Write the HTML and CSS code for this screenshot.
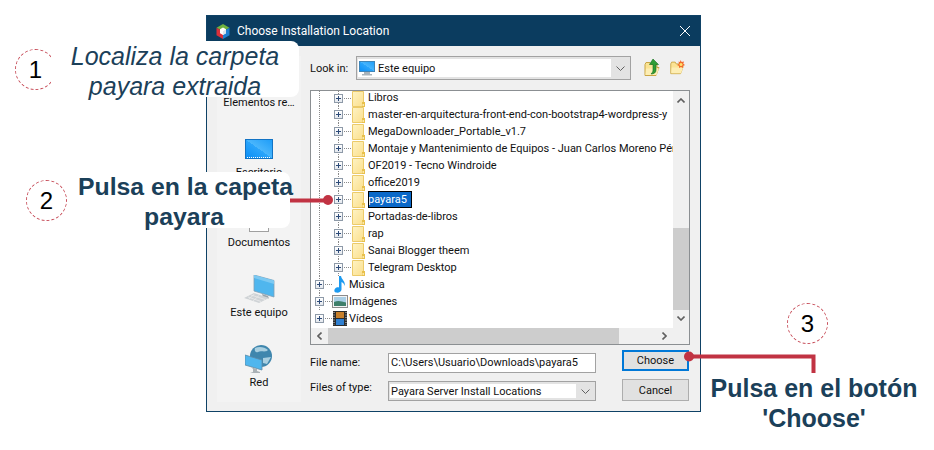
FILE: index.html
```html
<!DOCTYPE html>
<html lang="es">
<head>
<meta charset="utf-8">
<title>Choose Installation Location</title>
<link rel="stylesheet" href="styles.css">
</head>
<body>
<svg class="defs" width="0" height="0" aria-hidden="true">
  <defs>
    <linearGradient id="fold" x1="0" y1="0" x2="1" y2="1"><stop offset="0" stop-color="#fef3c4"/><stop offset="1" stop-color="#fbdf8c"/></linearGradient>
    <linearGradient id="scr" x1="0" y1="1" x2="1" y2="0"><stop offset="0" stop-color="#0a8df5"/><stop offset=".5" stop-color="#2aa5fb"/><stop offset=".5" stop-color="#4ab6fc"/><stop offset="1" stop-color="#1c9cf8"/></linearGradient>
    <symbol id="folder" viewBox="0 0 13 16">
      <path d="M.5.5H11.5V15.5H.5Z" fill="url(#fold)" stroke="#eccb6a"/>
      <path d="M10 11H13V16H10Z" fill="#e8c04c"/>
      <path d="M10.5 13H12V15H10.5Z" fill="#fbe8a8"/>
    </symbol>
    <symbol id="small-folder" viewBox="0 0 16 18">
      <path d="M1 5.5 1 16.5H12L15 8.5H13V5.5H7L6 3.5H2Z" fill="#fbe394" stroke="#c9a544" stroke-width="1"/>
      <path d="M2 9.5H15L12.5 16H1.5Z" fill="#fdeeb4"/>
    </symbol>
  </defs>
</svg>

<main class="page">
  <section class="dialog">
    <header class="titlebar">
      <svg class="logo" viewBox="0 0 14 15">
        <path d="M7 0 13.5 3.7 7 7.5.5 3.7Z" fill="#6fb23f"/>
        <path d="M.5 3.700V11.200L7 15V7.500Z" fill="#d8303a"/>
        <path d="M13.500 3.700V11.200L7 15V7.500Z" fill="#1f7fd0"/>
        <path d="M7 3.500 10 5.250V9.250L7 11 4 9.250V5.250Z" fill="#fff"/>
        <path d="M7 7.200 10 5.250V9.250L7 11Z" fill="#dce6ee"/>
      </svg>
      <span class="title">Choose Installation Location</span>
      <svg class="close" viewBox="0 0 10 10"><path d="M0 0 10 10M10 0 0 10" stroke="#fff" stroke-width="1" fill="none"/></svg>
    </header>
    <div class="content">
      <nav class="sidebar">
        <div class="side-item"><span>Elementos re…</span></div>
        <div class="side-item">
          <svg class="side-icon desk" viewBox="0 0 28 20"><rect x=".5" y=".5" width="27" height="19" fill="url(#scr)" stroke="#1273c4"/><path d="M2 18.5H26" stroke="#fff" stroke-dasharray="1 1" stroke-width="1"/></svg>
          <span>Escritorio</span>
        </div>
        <div class="side-item">
          <svg class="side-icon docs" viewBox="0 0 20 30"><rect x=".5" y=".5" width="19" height="29" fill="#fff" stroke="#a0a0a0"/></svg>
          <span>Documentos</span>
        </div>
        <div class="side-item">
          <svg class="side-icon pc" viewBox="0 0 31 28">
            <path d="M10 0 30 5.500V22L10 16Z" fill="#4fb6ee" stroke="#7f9fb5" stroke-width=".8"/>
            <path d="M10 0 30 5.500 30 9 10 3Z" fill="#7cc9f2"/>
            <path d="M18 19 24 21 25 23.500 19 22Z" fill="#9aa4ab"/>
            <path d="M10 18 25 23 15 28 0 23Z" fill="#cfd3d6"/>
            <path d="M7 20 21 24.500M4 22 17 26.500M10.500 19 4.500 24.500M15 20.500 9 26" stroke="#eeeeee" stroke-width=".7"/>
          </svg>
          <span>Este equipo</span>
        </div>
        <div class="side-item">
          <svg class="side-icon net" viewBox="0 0 28 28">
            <circle cx="16" cy="11" r="11" fill="#3f86ad"/>
            <path d="M10 3C14 1 20 2 23 5 20 8 16 5 13 7 11 8 9 6 10 3ZM18 13 26 12 22 19 18 18Z" fill="#a9cfe0"/>
            <path d="M0 10 17 15V25L0 20Z" fill="#4fb6ee" stroke="#5f8aa5" stroke-width=".8"/>
            <path d="M6 22 12 24V26L15 27V28H5L8 27V24Z" fill="#aab1b6"/>
          </svg>
          <span>Red</span>
        </div>
      </nav>
      <div class="main">
        <div class="lookin">
          <label class="lookin-label">Look in:</label>
          <div class="combo wide">
            <div class="combo-value">
              <svg class="monitor" viewBox="0 0 16 15"><rect x=".5" y=".5" width="15" height="10" fill="url(#scr)" stroke="#3f85b8"/><path d="M5 11H11V13H13V14.5H3V13H5Z" fill="#a9b3ba"/></svg>
              <span>Este equipo</span>
            </div>
            <svg class="chev" viewBox="0 0 9 5"><path d="M.5.5 4.5 4.5 8.5.5" fill="none" stroke="#606060"/></svg>
          </div>
          <svg class="tool up" viewBox="0 0 16 18">
            <use href="#small-folder"/>
            <path d="M9 0 14.5 5.5H12V11C12 14 9.500 15 7 15 9 13 9 12 9 10V5.500H5.500Z" fill="#2f9d35" stroke="#146e1f" stroke-width=".6"/>
          </svg>
          <svg class="tool new" viewBox="0 0 16 16">
            <g transform="translate(0 -1)"><use href="#small-folder"/></g>
            <path d="M11.500 0 12.700 2 15 1.500 14.300 3.700 16 5 14 6 14 8 12 7 10 8 10 6 8 5 10 3.700 9.500 1.500 11 2Z" fill="#f26a2b"/>
            <circle cx="12" cy="4.500" r="1.500" fill="#ffe36e"/>
          </svg>
        </div>

        <div class="tree">
          <ul class="rows">
            <li class="row nested"><i class="exp"></i><i class="dash"></i><svg class="fld"><use href="#folder"/></svg><span class="name">Libros</span></li>
            <li class="row nested"><i class="exp"></i><i class="dash"></i><svg class="fld"><use href="#folder"/></svg><span class="name">master-en-arquitectura-front-end-con-bootstrap4-wordpress-y</span></li>
            <li class="row nested"><i class="exp"></i><i class="dash"></i><svg class="fld"><use href="#folder"/></svg><span class="name">MegaDownloader_Portable_v1.7</span></li>
            <li class="row nested"><i class="exp"></i><i class="dash"></i><svg class="fld"><use href="#folder"/></svg><span class="name">Montaje y Mantenimiento de Equipos - Juan Carlos Moreno Pérez</span></li>
            <li class="row nested"><i class="exp"></i><i class="dash"></i><svg class="fld"><use href="#folder"/></svg><span class="name">OF2019 - Tecno Windroide</span></li>
            <li class="row nested"><i class="exp"></i><i class="dash"></i><svg class="fld"><use href="#folder"/></svg><span class="name">office2019</span></li>
            <li class="row nested"><i class="exp"></i><i class="dash"></i><svg class="fld"><use href="#folder"/></svg><span class="name selected">payara5</span></li>
            <li class="row nested"><i class="exp"></i><i class="dash"></i><svg class="fld"><use href="#folder"/></svg><span class="name">Portadas-de-libros</span></li>
            <li class="row nested"><i class="exp"></i><i class="dash"></i><svg class="fld"><use href="#folder"/></svg><span class="name">rap</span></li>
            <li class="row nested"><i class="exp"></i><i class="dash"></i><svg class="fld"><use href="#folder"/></svg><span class="name">Sanai Blogger theem</span></li>
            <li class="row nested"><i class="exp"></i><i class="dash"></i><svg class="fld"><use href="#folder"/></svg><span class="name">Telegram Desktop</span></li>
            <li class="row top"><i class="exp"></i><i class="dash"></i>
              <svg class="lib" viewBox="0 0 16 17"><path d="M7 0H9C9.500 4 14 5 12.500 10 12 7 10.500 6.500 9.500 6V13.500C9.500 16 6.500 17 4 16.500 1.500 16 2 12.500 4.500 11.500 5.500 11 6.500 11 7 11.500Z" fill="#1c9af0"/></svg>
              <span class="name">Música</span></li>
            <li class="row top"><i class="exp"></i><i class="dash"></i>
              <svg class="lib" viewBox="0 0 16 17"><rect x=".5" y="2.500" width="15" height="12" fill="#f4f4f4" stroke="#8b8b8b"/><rect x="2" y="4" width="12" height="9" fill="#a9cfe6"/><path d="M2 9C6 7 9 8 14 9.500V13H2Z" fill="#3f7f6a"/></svg>
              <span class="name">Imágenes</span></li>
            <li class="row top end"><i class="exp"></i><i class="dash"></i>
              <svg class="lib" viewBox="0 0 16 17"><rect x="1" y="1" width="14" height="15" fill="#2b2b2b"/><rect x="4" y="2" width="8" height="6" fill="#c77f2a"/><rect x="4" y="9" width="8" height="6" fill="#2f7fd0"/><path d="M2 2V15M14 2V15" stroke="#ddd" stroke-dasharray="1 1.500" stroke-width="1"/></svg>
              <span class="name">Vídeos</span></li>
          </ul>
          <div class="vbar">
            <svg class="arrow" viewBox="0 0 8 5"><path d="M.5 4.500 4 1 7.500 4.500" fill="none" stroke="#606060" stroke-width="1.600"/></svg>
            <div class="vthumb"></div>
            <svg class="arrow" viewBox="0 0 8 5"><path d="M.5.500 4 4 7.500.500" fill="none" stroke="#606060" stroke-width="1.600"/></svg>
          </div>
          <div class="hbar">
            <svg class="arrow-h" viewBox="0 0 5 8"><path d="M4.500.500 1 4 4.500 7.500" fill="none" stroke="#606060" stroke-width="1.600"/></svg>
            <div class="hthumb"></div>
            <svg class="arrow-h" viewBox="0 0 5 8"><path d="M.500.500 4 4 .500 7.500" fill="none" stroke="#606060" stroke-width="1.600"/></svg>
          </div>
          <div class="corner"></div>
        </div>

        <div class="form">
          <label class="form-label first">File name:</label>
          <div class="input first">C:\Users\Usuario\Downloads\payara5</div>
          <button class="btn primary">Choose</button>
          <label class="form-label second">Files of type:</label>
          <div class="combo narrow second">
            <div class="combo-value"><span>Payara Server Install Locations</span></div>
            <svg class="chev" viewBox="0 0 9 5"><path d="M.5.5 4.500 4.500 8.500.5" fill="none" stroke="#606060"/></svg>
          </div>
          <button class="btn">Cancel</button>
        </div>
      </div>
    </div>
  </section>

  <svg class="connectors" viewBox="0 0 934 450" aria-hidden="true">
    <path d="M290 200.500H328" fill="none" stroke="#c13343" stroke-width="4"/>
    <circle cx="328" cy="200" r="5" fill="#c13343"/>
    <path d="M689 356.500H813.500V373" fill="none" stroke="#c13343" stroke-width="4"/>
    <circle cx="689" cy="356.500" r="5" fill="#c13343"/>
  </svg>

  <div class="num n1">1</div>
  <div class="num n2">2</div>
  <div class="num n3">3</div>

  <div class="note c1">Localiza la carpeta<br>payara extraida</div>
  <div class="note c2">Pulsa en la capeta<br>payara</div>
  <div class="note c3">Pulsa en el botón<br>'Choose'</div>
</main>
</body>
</html>
```

FILE: styles.css
```css
* { box-sizing: border-box; }
html, body { margin: 0; padding: 0; background: #fff; }
body { width: 934px; height: 450px; overflow: hidden; font-family: Roboto, "Noto Sans", sans-serif; font-size: 11px; color: #111; }
.defs { display: block; height: 0; }
.page { position: relative; width: 934px; height: 450px; padding: 15px 0 0 206px; }

.dialog { width: 495px; height: 397px; border: 1px solid #0f4266; background: #f0f0f0; display: flex; flex-direction: column; }
.titlebar { height: 30px; flex: none; background: #0b3c5f; color: #fff; display: flex; align-items: center; padding: 0 10px 0 9px; }
.logo { width: 14px; height: 15px; flex: none; }
.title { margin-left: 7px; font-size: 12px; flex: 1; line-height: 30px; }
.close { width: 10px; height: 10px; flex: none; }

.content { flex: 1; display: flex; min-height: 0; }
.sidebar { width: 84px; margin: 10px 0 9px 10px; background: #f3f3f3; display: flex; flex-direction: column; flex: none; }
.side-item { height: 70px; flex: none; display: flex; flex-direction: column; align-items: center; justify-content: flex-end; }
.side-item:first-child { height: 54px; }
.side-item span { display: block; line-height: 15px; height: 15px; margin-top: 6px; white-space: nowrap; }
.side-icon { display: block; flex: none; }
.desk { width: 28px; height: 20px; }
.docs { width: 20px; height: 30px; margin-bottom: -3px; }
.pc { width: 31px; height: 28px; margin-bottom: -4px; }
.net { width: 28px; height: 28px; margin-bottom: -4px; }

.main { width: 380px; margin-left: 9px; flex: none; padding-top: 10px; display: flex; flex-direction: column; }
.lookin { height: 24px; display: flex; align-items: center; }
.lookin-label { width: 46px; flex: none; }
.combo { height: 100%; border: 1px solid #a2a2a2; background: #e3e3e3; display: flex; align-items: center; padding: 2px 0 2px 1px; }
.combo-value { flex: 1; background: #fff; height: 100%; display: flex; align-items: center; white-space: nowrap; padding-left: 1px; }
.wide { width: 275px; }
.monitor { width: 16px; height: 15px; margin-right: 3px; flex: none; }
.chev { width: 9px; height: 5px; flex: none; margin: 0 5px; }
.tool { flex: none; }
.up { width: 16px; height: 18px; margin-left: 13px; }
.new { width: 16px; height: 16px; margin-left: 9px; }

.tree { height: 255px; margin-top: 10px; border: 1px solid #8b8f92; background: #fff; display: grid; grid-template-columns: 362px 16px; grid-template-rows: 237px 16px; }
.rows { list-style: none; margin: 0; padding: 0; overflow: hidden; min-height: 0; }
.row { height: 17px; display: flex; align-items: center; white-space: nowrap; background-repeat: repeat-y; background-size: 1px 2px; background-image: linear-gradient(#8a8a8a 50%, transparent 50%); background-position: 8px 0; }
.row:first-child { height: 15px; }
.row:first-child .name { margin-top: -2px; }
.row.nested { padding-left: 23px; background-image: linear-gradient(#8a8a8a 50%, transparent 50%), linear-gradient(#8a8a8a 50%, transparent 50%); background-position: 8px 0, 27px 0; }
.row.top { padding-left: 4px; }
.row.end { background-image: none; }
.exp { width: 9px; height: 9px; flex: none; border: 1px solid #8e9aa8; background: linear-gradient(#fff, #e4e8ee); display: block; position: relative; }
.exp::before { content: ""; position: absolute; left: 1px; right: 1px; top: 3px; height: 1px; background: #2c4a78; }
.exp::after { content: ""; position: absolute; top: 1px; bottom: 1px; left: 3px; width: 1px; background: #2c4a78; }
.dash { width: 9px; height: 1px; flex: none; background: linear-gradient(90deg, #8a8a8a 50%, transparent 50%) 1px 0 / 2px 1px repeat-x; display: block; }
.fld { width: 13px; height: 16px; flex: none; }
.lib { width: 16px; height: 17px; flex: none; margin-right: 0; margin-left: -1px; }
.name { margin-left: 3px; line-height: 15px; }
.lib + .name { margin-left: 1px; }
.selected { background: #0a68c8; color: #fff; outline: 1px solid #000; outline-offset: -1px; padding: 1px 0; height: 17px; width: 44px; }

.vbar { background: #f0f0f0; display: flex; flex-direction: column; align-items: center; justify-content: flex-end; }
.vbar .arrow:first-child { margin: 7px 0 auto; }
.arrow { width: 8px; height: 5px; flex: none; }
.vthumb { width: 16px; height: 82px; background: #cdcdcd; margin-bottom: 6px; flex: none; }
.vbar .arrow:last-child { margin-bottom: 7px; }
.hbar { background: #f0f0f0; display: flex; align-items: center; }
.arrow-h { width: 5px; height: 8px; flex: none; margin-left: 6px; }
.hthumb { width: 291px; height: 16px; background: #cdcdcd; margin-left: 6px; flex: none; }
.hbar .arrow-h:last-child { margin-left: 43px; }
.corner { background: #f0f0f0; }

.form { margin-top: 5px; display: grid; grid-template-columns: 78px 208px 93px; grid-template-rows: 24px 22px; row-gap: 5px; }
.form-label { align-self: center; }
.form-label.second { margin-top: -6px; }
.input { height: 20px; margin-top: 3px; border: 1px solid #a2a2a2; background: #fff; padding-left: 2px; line-height: 18px; white-space: nowrap; overflow: hidden; }
.narrow { height: 20px; align-self: end; width: 208px; }
.btn { grid-column: 3; margin-left: 26px; width: 67px; font: inherit; color: #111; background: #e1e1e1; border: 1px solid #adadad; padding: 0; }
.btn.primary { height: 21px; border: 2px solid #0078d7; }

.connectors { position: absolute; left: 0; top: 0; width: 934px; height: 450px; pointer-events: none; }
.num { position: absolute; width: 41px; height: 41px; border: 1px dashed #c8505c; border-radius: 50%; text-align: center; color: #000; font: 24px/39px "Liberation Sans", sans-serif; background: #fff; }
.n1 { left: 15px; top: 49px; }
.n2 { left: 26px; top: 180px; }
.n3 { left: 787px; top: 303px; }

.note { position: absolute; font: 25px/30px "Liberation Sans", sans-serif; color: #1b4059; text-align: center; white-space: nowrap; }
.c1 { left: 51px; top: 41px; width: 248px; height: 56px; background: #fff; border-radius: 8px; font-style: italic; }
.c2 { left: 78px; top: 172px; width: 212px; height: 56px; background: #fff; border-radius: 8px; font-size: 24.8px; font-weight: bold; }
.c3 { left: 689px; top: 373px; width: 250px; font-weight: bold; background: transparent; }
```
